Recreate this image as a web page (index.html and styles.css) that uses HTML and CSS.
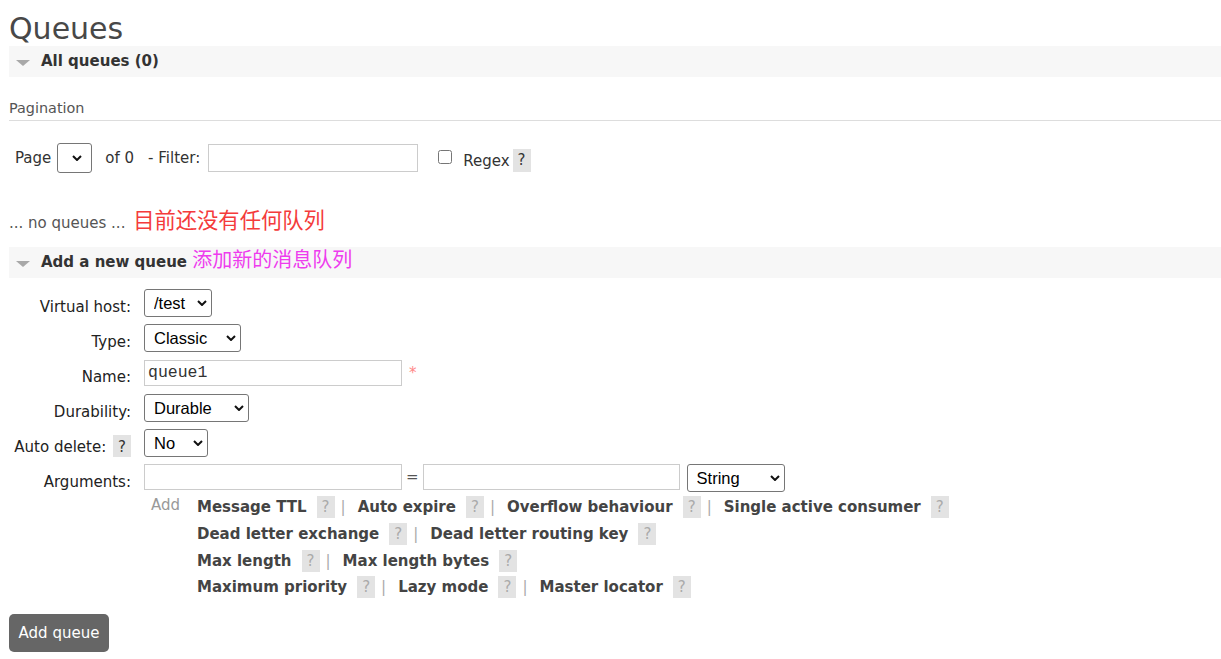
FILE: index.html
```html
<!DOCTYPE html>
<html lang="en">
<head>
<meta charset="UTF-8">
<meta name="viewport" content="width=device-width, initial-scale=1.0">
<title>Queues</title>
<link rel="stylesheet" href="styles.css">
</head>
<body>
<div class="main">
  <h1>Queues</h1>

  <div class="section">
    <h2 class="section-head"><span class="arrow"></span>All queues (0)</h2>
    <h3 class="pagination-title">Pagination</h3>
    <div class="pagination">
      <span class="page-label">Page</span>
      <span class="select-wrap page-wrap">
        <select class="select select-page"></select>
        <svg class="chevron" viewBox="0 0 10 6"><path d="M1 1 L5 5 L9 1"/></svg>
      </span>
      <span class="of-label">of 0</span>
      <span class="filter-label">- Filter:</span>
      <input type="text" class="text filter-input">
      <input type="checkbox" class="checkbox">
      <span class="regex-label">Regex</span>
      <span class="help">?</span>
    </div>
    <p class="empty">... no queues ... <span class="note note-red">目前还没有任何队列</span></p>
  </div>

  <div class="section">
    <h2 class="section-head"><span class="arrow"></span>Add a new queue <span class="note note-pink">添加新的消息队列</span></h2>
    <form class="form" onsubmit="return false">
      <label class="label">Virtual host:</label>
      <div class="field">
        <span class="select-wrap">
          <select class="select select-vhost"><option>/test</option></select>
          <svg class="chevron" viewBox="0 0 10 6"><path d="M1 1 L5 5 L9 1"/></svg>
        </span>
      </div>

      <label class="label">Type:</label>
      <div class="field">
        <span class="select-wrap">
          <select class="select select-type"><option>Classic</option></select>
          <svg class="chevron" viewBox="0 0 10 6"><path d="M1 1 L5 5 L9 1"/></svg>
        </span>
      </div>

      <label class="label">Name:</label>
      <div class="field">
        <input type="text" class="text name-input" value="queue1">
        <span class="required">*</span>
      </div>

      <label class="label">Durability:</label>
      <div class="field">
        <span class="select-wrap">
          <select class="select select-durability"><option>Durable</option></select>
          <svg class="chevron" viewBox="0 0 10 6"><path d="M1 1 L5 5 L9 1"/></svg>
        </span>
      </div>

      <label class="label label-help">Auto delete: <span class="help help-label">?</span></label>
      <div class="field">
        <span class="select-wrap">
          <select class="select select-autodelete"><option>No</option></select>
          <svg class="chevron" viewBox="0 0 10 6"><path d="M1 1 L5 5 L9 1"/></svg>
        </span>
      </div>

      <label class="label">Arguments:</label>
      <div class="args">
        <div class="args-line">
          <input type="text" class="text arg-input">
          <span class="equals">=</span>
          <input type="text" class="text arg-input arg-value">
          <span class="select-wrap argtype-wrap">
            <select class="select select-argtype"><option>String</option></select>
            <svg class="chevron" viewBox="0 0 10 6"><path d="M1 1 L5 5 L9 1"/></svg>
          </span>
        </div>
        <div class="args-add">
          <span class="add-label">Add</span>
          <div class="arg-links">
            <div class="arg-row">
              <span class="arg-link">Message TTL</span><span class="help help-muted">?</span><span class="sep">|</span>
              <span class="arg-link">Auto expire</span><span class="help help-muted">?</span><span class="sep">|</span>
              <span class="arg-link">Overflow behaviour</span><span class="help help-muted">?</span><span class="sep">|</span>
              <span class="arg-link">Single active consumer</span><span class="help help-muted">?</span>
            </div>
            <div class="arg-row">
              <span class="arg-link">Dead letter exchange</span><span class="help help-muted">?</span><span class="sep">|</span>
              <span class="arg-link">Dead letter routing key</span><span class="help help-muted">?</span>
            </div>
            <div class="arg-row">
              <span class="arg-link">Max length</span><span class="help help-muted">?</span><span class="sep">|</span>
              <span class="arg-link">Max length bytes</span><span class="help help-muted">?</span>
            </div>
            <div class="arg-row">
              <span class="arg-link">Maximum priority</span><span class="help help-muted">?</span><span class="sep">|</span>
              <span class="arg-link">Lazy mode</span><span class="help help-muted">?</span><span class="sep">|</span>
              <span class="arg-link">Master locator</span><span class="help help-muted">?</span>
            </div>
          </div>
        </div>
      </div>
    </form>
    <button class="btn">Add queue</button>
  </div>
</div>
</body>
</html>
```

FILE: styles.css
```css
body {
    margin: 0;
    font-family: "DejaVu Sans", Verdana, sans-serif;
    font-size: 15px;
    color: #444;
    background: #fff;
}

.main {
    padding-left: 9px;
}

h1 {
    font-size: 30px;
    font-weight: normal;
    line-height: 34px;
    margin: 11.5px 0 0;
    color: #484848;
}

.section-head {
    margin: 0;
    height: 31px;
    line-height: 31px;
    padding-left: 7px;
    background: #f7f7f7;
    font-size: 15px;
    font-weight: bold;
    color: #333;
}

.section + .section .section-head {
    margin-top: 11px;
}

.arrow {
    display: inline-block;
    width: 0;
    height: 0;
    border-left: 7px solid transparent;
    border-right: 7px solid transparent;
    border-top: 6px solid #a8a8a8;
    margin-right: 11px;
}

.note {
    font-family: "Noto Sans CJK SC", sans-serif;
    font-size: 20px;
    font-weight: normal;
    line-height: 20px;
}

.note-red {
    margin-left: 3px;
    font-size: 21.3px;
    color: #f43b3b;
}

.note-pink {
    color: #ee3cee;
}

.pagination-title {
    margin: 22px 0 0;
    padding-bottom: 3px;
    border-bottom: 1px solid #ddd;
    font-size: 14.4px;
    font-weight: normal;
    line-height: 18px;
    color: #555;
}

.pagination {
    display: flex;
    align-items: center;
    height: 30px;
    margin-top: 22.5px;
    color: #333;
    line-height: 18px;
}

.page-label {
    margin-left: 6px;
}

.select-wrap {
    position: relative;
    display: inline-block;
}

.select {
    display: block;
    height: 28px;
    margin: 0;
    padding: 0 0 0 9px;
    border: 1px solid #767676;
    border-radius: 3px;
    background: #fff;
    color: #000;
    font-family: "Liberation Sans", Arial, sans-serif;
    font-size: 16.5px;
    appearance: none;
    -webkit-appearance: none;
}

.chevron {
    position: absolute;
    right: 5px;
    top: 50%;
    width: 10px;
    height: 6px;
    margin-top: -3px;
    fill: none;
    stroke: #111;
    stroke-width: 2;
    pointer-events: none;
}

.page-wrap {
    margin-left: 6px;
}

.page-wrap .chevron {
    right: 10px;
}

.select-page {
    width: 35px;
    height: 30px;
}

.of-label {
    margin-left: 13px;
}

.filter-label {
    margin-left: 14px;
}

.text {
    box-sizing: border-box;
    height: 26px;
    margin: 0;
    padding: 0 3px;
    border: 1px solid #ccc;
    font-family: "Liberation Mono", "Courier New", monospace;
    font-size: 16.5px;
    color: #333;
    outline: none;
}

.filter-input {
    width: 210px;
    height: 28px;
    margin-left: 8px;
}

.checkbox {
    width: 14px;
    height: 14px;
    margin: 0 0 2px 20px;
}

.regex-label {
    margin-left: 11px;
    padding-top: 6px;
}

.help {
    display: inline-block;
    width: 18px;
    height: 22px;
    line-height: 22px;
    text-align: center;
    background: #e3e3e3;
    color: #333;
    font-weight: normal;
}

.pagination .help {
    height: 23px;
    line-height: 23px;
    margin: 5px 0 0 3px;
}

.empty {
    margin: 36px 0 0;
    line-height: 26px;
    color: #555;
}

.form {
    display: grid;
    grid-template-columns: 122px auto;
    justify-content: start;
    column-gap: 13px;
    row-gap: 7px;
    margin-top: 10.5px;
}

.label {
    height: 28px;
    box-sizing: border-box;
    padding-top: 10.5px;
    line-height: 17.5px;
    text-align: right;
    color: #222;
}

.label-help {
    padding-top: 6px;
}

.help-label {
    box-sizing: border-box;
    padding-top: 3px;
    line-height: 19px;
    margin-left: 2px;
}

.field {
    display: flex;
    align-items: flex-start;
    height: 28px;
}

.select-vhost { width: 68px; }
.select-type { width: 97px; }
.select-durability { width: 105px; }
.select-autodelete { width: 64px; }
.select-argtype { width: 98px; }

.argtype-wrap {
    margin-left: 7px;
}

.name-input {
    width: 258px;
    margin-top: 1px;
}

.required {
    margin-left: 7px;
    line-height: 26px;
    padding-top: 1px;
    color: #f88;
}

.args-line {
    display: flex;
    align-items: flex-start;
}

.arg-input {
    width: 258px;
}

.arg-value {
    width: 257px;
}

.equals {
    margin: 0 4px;
    line-height: 26px;
    color: #555;
}

.args-add {
    display: flex;
    margin-top: 2.8px;
}

.add-label {
    width: 46px;
    margin: -2.3px 0 0 7px;
    line-height: 26.67px;
    color: #999;
}

.arg-row {
    display: flex;
    align-items: baseline;
    line-height: 26.67px;
    white-space: nowrap;
}

.arg-link {
    font-weight: bold;
    color: #444;
}

.help-muted {
    margin-left: 10px;
    color: #aaa;
}

.sep {
    margin: 0 12px 0 6px;
    color: #aaa;
}

.btn {
    display: block;
    width: 100px;
    height: 38px;
    margin-top: 13.5px;
    padding: 0;
    border: none;
    border-radius: 5px;
    background: #666;
    color: #fff;
    font-family: "DejaVu Sans", Verdana, sans-serif;
    font-size: 15px;
    cursor: pointer;
}
```
